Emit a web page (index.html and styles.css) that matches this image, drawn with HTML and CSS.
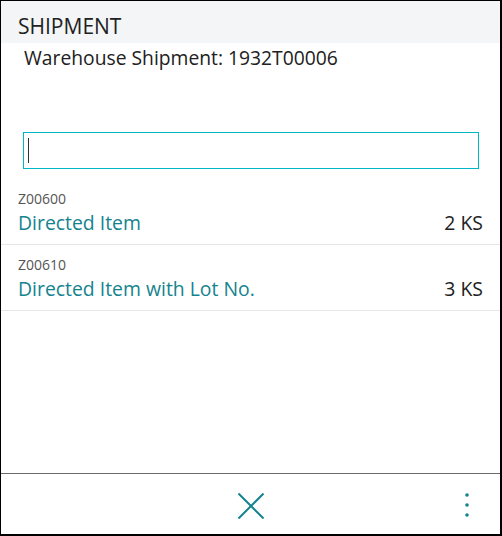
FILE: index.html
```html
<!DOCTYPE html>
<html>
<head>
<link rel="stylesheet" href="styles.css">
</head>
<body>

<div class="frame">
    <div class="page-head">
        <div class="page-title">SHIPMENT</div>
    </div>
    <div class="page-sub">Warehouse Shipment: 1932T00006</div>

    <div class="search">
        <div class="search-box"><span class="caret"></span></div>
    </div>

    <div class="lines">
        <div class="line">
            <div class="line-no">Z00600</div>
            <div class="line-row">
                <span class="line-name">Directed Item</span>
                <span class="line-qty">2 KS</span>
            </div>
        </div>
        <div class="line">
            <div class="line-no">Z00610</div>
            <div class="line-row">
                <span class="line-name">Directed Item with Lot No.</span>
                <span class="line-qty">3 KS</span>
            </div>
        </div>
    </div>

    <div class="actions">
        <div class="action-close">
            <svg width="26" height="26" viewBox="0 0 26 26">
                <path d="M0.5 0.5 L25.5 25.5 M25.5 0.5 L0.5 25.5" stroke="#15838f" stroke-width="2" fill="none"/>
            </svg>
        </div>
        <div class="action-more">
            <svg width="6" height="24" viewBox="0 0 6 24">
                <circle cx="3" cy="2" r="1.8" fill="#15838f"/>
                <circle cx="3" cy="12" r="1.8" fill="#15838f"/>
                <circle cx="3" cy="22" r="1.8" fill="#15838f"/>
            </svg>
        </div>
    </div>
</div>

</body>
</html>
```

FILE: styles.css
```css
html, body {
    margin: 0;
    padding: 0;
    background: #fff;
}

.frame {
    box-sizing: border-box;
    width: 502px;
    height: 536px;
    border-top: 1px solid #000;
    border-left: 1px solid #000;
    border-right: 2px solid #000;
    border-bottom: 2px solid #000;
    display: flex;
    flex-direction: column;
    font-family: "Open Sans", "Noto Sans", sans-serif;
    color: #212121;
}

.page-head {
    background: #f4f5f7;
    box-sizing: border-box;
    height: 42px;
    padding: 11px 0 0 17px;
}

.page-title {
    font-size: 21px;
    line-height: 28px;
}

.page-sub {
    font-size: 19.3px;
    line-height: 26px;
    padding: 2px 0 0 23px;
}

.search {
    padding: 61px 21px 0 22px;
}

.search-box {
    height: 35px;
    border: 1px solid #00b7c3;
    display: flex;
    align-items: center;
    padding-left: 4px;
}

.caret {
    width: 1px;
    height: 25px;
    background: #333;
}

.lines {
    margin-top: 10px;
    flex: 1;
}

.line {
    border-bottom: 1px solid #e6e6e6;
    padding: 12px 17px 8px 17px;
}

.line-no {
    font-size: 14px;
    line-height: 16px;
    color: #555;
}

.line-row {
    margin-top: 3px;
    display: flex;
    justify-content: space-between;
    align-items: baseline;
    line-height: 26px;
}

.line-name {
    font-size: 19.4px;
    color: #15838f;
}

.line-qty {
    font-size: 19.4px;
    color: #212121;
}

.actions {
    height: 60px;
    border-top: 1px solid #6b6b6b;
    display: flex;
    justify-content: center;
    position: relative;
}

.action-close {
    display: flex;
    padding-top: 19px;
}

.action-more {
    position: absolute;
    right: 30px;
    top: 19px;
    display: flex;
}
```
